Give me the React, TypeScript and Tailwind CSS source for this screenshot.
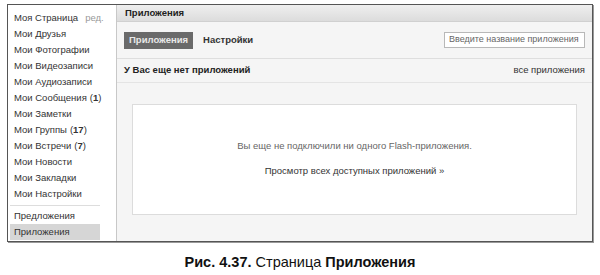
const menu: { label: string; count?: number }[] = [
  { label: 'Мои Друзья' },
  { label: 'Мои Фотографии' },
  { label: 'Мои Видеозаписи' },
  { label: 'Мои Аудиозаписи' },
  { label: 'Мои Сообщения', count: 1 },
  { label: 'Мои Заметки' },
  { label: 'Мои Группы', count: 17 },
  { label: 'Мои Встречи', count: 7 },
  { label: 'Мои Новости' },
  { label: 'Мои Закладки' },
  { label: 'Мои Настройки' },
];

function Sidebar() {
  return (
    <div className="w-[108px] shrink-0 whitespace-nowrap bg-white pt-[5px] text-[9.5px] text-[#333]">
      <div className="flex h-4 items-center px-[6px]">
        <span>Моя Страница</span>
        <span className="ml-[7px] text-[#999]">ред.</span>
      </div>
      {menu.map((item) => (
        <div key={item.label} className="flex h-4 items-center px-[6px]">
          {item.label}
          {item.count !== undefined && (
            <span className="ml-[3px]">
              (<b>{item.count}</b>)
            </span>
          )}
        </div>
      ))}
      <div className="mx-[2px] mt-[3px] mb-[2px] w-[90px] border-t border-[#ddd]" />
      <div className="flex h-4 items-center px-[6px]">Предложения</div>
      <div className="mx-[2px] flex h-4 w-[90px] items-center bg-[#d6d6d6] px-[4px]">Приложения</div>
    </div>
  );
}

function Main() {
  return (
    <div className="flex flex-1 flex-col whitespace-nowrap border-l border-[#c8c8c8] bg-[#f5f5f5] text-[9.5px]">
      <div className="flex h-[17px] items-center border-b border-[#d0d0d0] bg-gradient-to-b from-[#efefef] to-[#dcdcdc] px-[8px] font-bold text-[#222]">
        Приложения
      </div>
      <div className="flex h-[37px] items-center border-b border-[#dedede] px-[7px]">
        <div className="flex h-[17px] items-center bg-[#6a6a6a] px-[5px] font-bold text-[#e8e8e8]">Приложения</div>
        <div className="ml-[10px] font-bold text-[#333]">Настройки</div>
        <div className="ml-auto flex h-[16px] w-[141px] items-center overflow-hidden border border-[#b8b8b8] bg-white px-[4px] text-[9px] text-[#666]">
          Введите название приложения
        </div>
      </div>
      <div className="flex h-[24px] items-center border-b border-[#e4e4e4] px-[7px]">
        <span className="font-bold text-[#222]">У Вас еще нет приложений</span>
        <span className="ml-auto text-[#333]">все приложения</span>
      </div>
      <div className="flex flex-1 px-[15px] pt-[21px] pb-[26px]">
        <div className="flex flex-1 flex-col items-center justify-center gap-[10px] border border-[#dcdcdc] bg-white pb-[2px]">
          <span className="text-[#666]">Вы еще не подключили ни одного Flash-приложения.</span>
          <span className="text-[#333]">Просмотр всех доступных приложений »</span>
        </div>
      </div>
    </div>
  );
}

export default function App() {
  return (
    <div className="h-[275px] w-[600px] bg-white font-['Liberation_Sans',Arial,sans-serif]">
      <div className="pl-[7px] pt-[4px]">
        <div className="flex h-[238px] w-[586px] border border-[#555] shadow-[1px_1px_0_#999]">
          <Sidebar />
          <Main />
        </div>
      </div>
      <div className="mt-[10px] text-center text-[14.5px] text-[#111]">
        <b>Рис. 4.37.</b> Страница <b>Приложения</b>
      </div>
    </div>
  );
}
